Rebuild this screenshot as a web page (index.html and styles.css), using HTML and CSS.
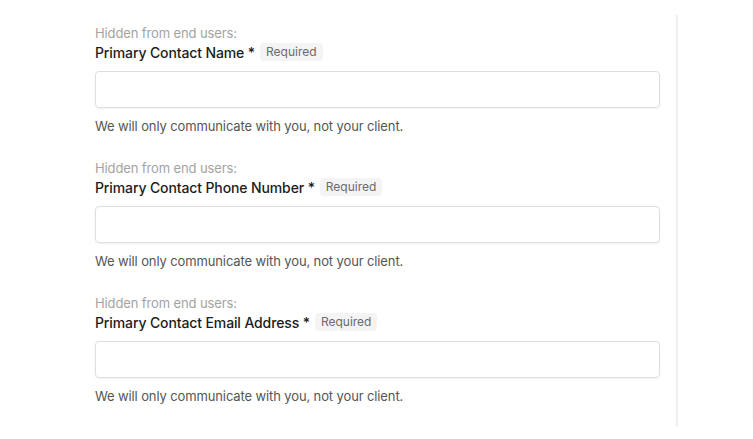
FILE: index.html
```html
<!DOCTYPE html>
<html>
<head>
<meta charset="utf-8">
<link rel="stylesheet" href="styles.css">
</head>
<body>
<div class="page">
  <div class="form">
    <div class="field">
      <div class="hint">Hidden from end users:</div>
      <div class="label-row"><span class="label">Primary Contact Name *</span><span class="badge">Required</span></div>
      <div class="input"></div>
      <div class="help">We will only communicate with you, not your client.</div>
    </div>
    <div class="field">
      <div class="hint">Hidden from end users:</div>
      <div class="label-row"><span class="label">Primary Contact Phone Number *</span><span class="badge">Required</span></div>
      <div class="input"></div>
      <div class="help">We will only communicate with you, not your client.</div>
    </div>
    <div class="field">
      <div class="hint">Hidden from end users:</div>
      <div class="label-row"><span class="label">Primary Contact Email Address *</span><span class="badge">Required</span></div>
      <div class="input"></div>
      <div class="help">We will only communicate with you, not your client.</div>
    </div>
  </div>
  <div class="divider"></div>
  <div class="edge"></div>
</div>
</body>
</html>
```
FILE: styles.css
```css
html, body {
  margin: 0;
  padding: 0;
  background: #ffffff;
}
body {
  width: 753px;
  height: 439px;
  overflow: hidden;
  font-family: Inter, "Noto Sans", "Liberation Sans", sans-serif;
  letter-spacing: -0.12px;
}
.page {
  display: flex;
  height: 439px;
}
.form {
  width: 565px;
  padding-left: 95px;
  padding-top: 24px;
  display: flex;
  flex-direction: column;
  gap: 24px;
}
.field {
  display: flex;
  flex-direction: column;
}
.hint {
  font-size: 13px;
  line-height: 18px;
  color: #a3a3a3;
}
.label-row {
  display: flex;
  align-items: center;
  gap: 5px;
  height: 20px;
}
.label {
  font-size: 14px;
  font-weight: 500;
  color: #1c1c1c;
}
.badge {
  font-size: 12px;
  line-height: 18px;
  color: #6b6b6b;
  background: #f4f4f4;
  border-radius: 4px;
  padding: 0 6px;
  letter-spacing: 0;
}
.input {
  margin-top: 9px;
  height: 35px;
  border: 1px solid #dedede;
  border-radius: 4px;
  box-shadow: 0 1px 2px rgba(0, 0, 0, 0.06);
}
.help {
  margin-top: 9px;
  font-size: 13px;
  line-height: 18px;
  color: #555555;
}
.divider {
  margin-left: 16px;
  margin-top: 15px;
  width: 2px;
  height: 412px;
  background: #efefef;
}
.edge {
  margin-left: auto;
  width: 1px;
  height: 420px;
  background: #f8f8f8;
}
```
